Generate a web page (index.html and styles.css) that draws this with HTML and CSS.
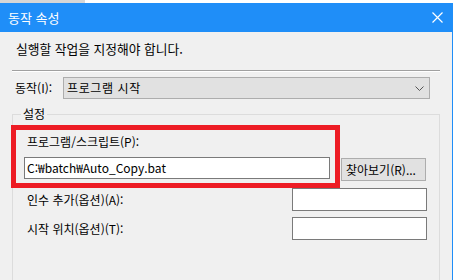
FILE: index.html
```html
<!DOCTYPE html>
<html lang="ko">
<head>
    <meta charset="UTF-8">
    <title>동작 속성</title>
    <link rel="stylesheet" href="styles.css">
</head>
<body>
    <div class="page">
        <div class="strip"></div>
        <div class="titlebar">
            <span class="title">동작 속성</span>
            <svg class="close" width="11" height="11" viewBox="0 0 11 11">
                <path d="M0.5 0.5 L10.5 10.5 M10.5 0.5 L0.5 10.5" stroke="#fff" stroke-width="1.2" fill="none"/>
            </svg>
        </div>

        <div class="dialog">
            <p class="instruction">실행할 작업을 지정해야 합니다.</p>
            <div class="separator"></div>

            <div class="action-row">
                <label class="action-label">동작(I):</label>
                <div class="combo">
                    <span class="combo-text">프로그램 시작</span>
                    <svg width="9" height="5" viewBox="0 0 9 5">
                        <path d="M0.5 0.5 L4.5 4.5 L8.5 0.5" stroke="#555" stroke-width="1" fill="none"/>
                    </svg>
                </div>
            </div>

            <fieldset class="settings">
                <legend>설정</legend>

                <div class="program-row">
                    <div class="highlight">
                        <div class="field-label">프로그램/스크립트(P):</div>
                        <div class="textbox program-input">C:₩batch₩Auto_Copy.bat</div>
                    </div>
                    <button class="browse-button">찾아보기(R)...</button>
                </div>

                <div class="option-row">
                    <span class="field-label">인수 추가(옵션)(A):</span>
                    <div class="textbox small-input"></div>
                </div>
                <div class="option-row">
                    <span class="field-label">시작 위치(옵션)(T):</span>
                    <div class="textbox small-input"></div>
                </div>
            </fieldset>
        </div>
    </div>
</body>
</html>
```

FILE: styles.css
```css
:root {
    --accent: #1f8ef8;
    --face: #f0f0f0;
    --control: #e1e1e1;
    --control-border: #adadad;
    --red: #ed1c24;
}

* {
    box-sizing: border-box;
}

html, body {
    margin: 0;
    padding: 0;
}

body {
    font-family: "Noto Sans CJK KR", "Noto Sans", sans-serif;
    font-size: 12px;
    color: #000;
    background: var(--face);
}

.page {
    width: 453px;
    height: 280px;
    overflow: hidden;
}

.strip {
    height: 3px;
    background: linear-gradient(to right, #d6d6d6 85px, #fff 85px);
}

.titlebar {
    height: 29px;
    background: var(--accent);
    display: flex;
    align-items: center;
    justify-content: space-between;
    padding: 0 10px 0 8px;
    color: #fff;
}

.title {
    font-size: 13px;
    line-height: 16px;
}

.dialog {
    height: 248px;
    background: var(--face);
    border-right: 1px solid var(--accent);
    padding: 0 12px;
    display: flex;
    flex-direction: column;
}

.instruction {
    margin: 9px 0 0 4px;
    font-size: 12.75px;
    line-height: 16px;
}

.separator {
    margin-top: 13px;
    border-top: 1px solid #a0a0a0;
    border-bottom: 1px solid #fff;
}

.action-row {
    margin-top: 5px;
    display: flex;
    align-items: center;
    height: 22px;
}

.action-label {
    width: 51px;
    padding-left: 3px;
    line-height: 16px;
}

.combo {
    width: 367px;
    height: 22px;
    background: var(--control);
    border: 1px solid var(--control-border);
    display: flex;
    align-items: center;
    justify-content: space-between;
    padding: 0 5px 0 3px;
    line-height: 16px;
}

.combo-text {
    letter-spacing: 0.6px;
}

.settings {
    margin: 8px 0 0;
    padding: 0;
    border: 1px solid #dcdcdc;
    border-bottom: none;
    flex: 1;
    min-width: 0;
}

.settings legend {
    margin-left: 8px;
    padding: 0 2px;
    line-height: 14px;
}

.program-row {
    display: flex;
    align-items: flex-start;
    margin: 4px 0 0 -2px;
}

.highlight {
    width: 329px;
    height: 63px;
    border: 5px solid var(--red);
    padding: 4px 0 0 8px;
}

.highlight .field-label {
    padding-left: 3px;
}

.field-label {
    line-height: 16px;
}

.textbox {
    background: #fff;
    border: 1px solid #7a7a7a;
    line-height: 16px;
}

.program-input {
    margin-top: 7px;
    width: 306px;
    height: 22px;
    padding: 2px 2px;
}

.browse-button {
    margin: 33px 0 0 1px;
    width: 85px;
    height: 23px;
    padding: 0 0 0 4px;
    background: var(--control);
    border: 1px solid var(--control-border);
    font: inherit;
    line-height: 16px;
    text-align: left;
    color: #000;
}

.option-row {
    display: flex;
    align-items: center;
    justify-content: space-between;
    margin: 0 12px 6px 14px;
}

.small-input {
    width: 135px;
    height: 23px;
}
```
